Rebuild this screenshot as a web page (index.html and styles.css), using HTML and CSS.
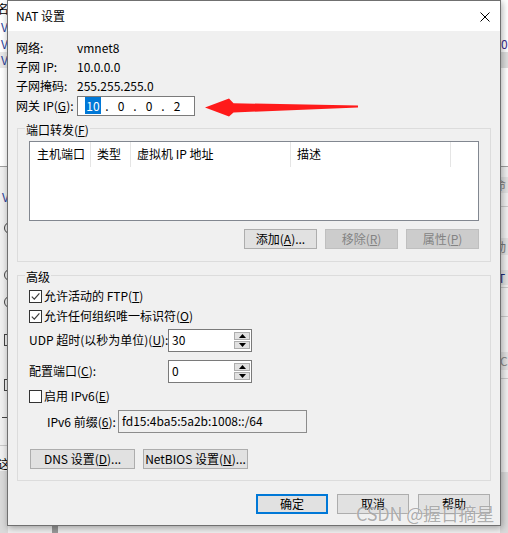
FILE: index.html
```html
<!DOCTYPE html>
<html lang="zh-CN">
<head>
<meta charset="utf-8">
<title>NAT 设置</title>
<link rel="stylesheet" href="styles.css">
</head>
<body>
<div class="desktop">
  <div class="bgwin">
    <div class="strip strip-left">
      <div class="s h18 white"><span class="frag fl-ming">名</span></div>
      <div class="s h17 white"><span class="frag fl-v">V</span></div>
      <div class="s h17 white"><span class="frag fl-v">V</span></div>
      <div class="s h16 band"><span class="frag fl-v">V</span></div>
      <div class="s h98 white"></div>
      <div class="s h1 line"></div>
      <div class="s h21"></div>
      <div class="s h18"><span class="frag fl-v2">V</span></div>
      <div class="s h14"></div>
      <div class="s h16"><span class="radio"></span></div>
      <div class="s h31"></div>
      <div class="s h16"><span class="radio"></span></div>
      <div class="s h11"></div>
      <div class="s h16"><span class="radio"></span></div>
      <div class="s h22"></div>
      <div class="s h16"><span class="cbx"></span></div>
      <div class="s h29"></div>
      <div class="s h16"><span class="cbx"></span></div>
      <div class="s h16"></div>
      <div class="s h16"><span class="dash"></span></div>
      <div class="s h20"></div>
      <div class="s h1 line2"></div>
      <div class="s h10"></div>
      <div class="s h15"><span class="frag fl-zhe">这</span></div>
      <div class="s rest dark"></div>
    </div>
    <div class="bg-middle">
      <div class="bg-fill"></div>
      <div class="bg-bottom"><span class="bg-bar"></span></div>
    </div>
    <div class="strip strip-right">
      <div class="s h35 white"></div>
      <div class="s h17 white"><span class="frag fr-0">0</span></div>
      <div class="s h16 band2"></div>
      <div class="s h98 white"></div>
      <div class="s h1 line"></div>
      <div class="s h10"></div>
      <div class="s h16 block"><span class="frag fr-txt">命</span></div>
      <div class="s h13"></div>
      <div class="s h1 line2"></div>
      <div class="s h31"></div>
      <div class="s h17 block"><span class="frag fr-txt">动</span></div>
      <div class="s h15"></div>
      <div class="s h15 block"><span class="frag fr-t">T</span></div>
      <div class="s h2"></div>
      <div class="s h1 line2"></div>
      <div class="s h28"></div>
      <div class="s h1 line2"></div>
      <div class="s h35"></div>
      <div class="s h18 block"><span class="frag fr-cf">CF</span></div>
      <div class="s h8"></div>
      <div class="s h1 line2"></div>
      <div class="s h93"></div>
      <div class="s rest dark"></div>
    </div>
  </div>

  <section class="dialog">
    <header class="titlebar">
      <span class="title">NAT 设置</span>
      <svg class="close" width="10" height="10" viewBox="0 0 10 10"><path d="M0.5 0.5 L9.5 9.5 M9.5 0.5 L0.5 9.5" stroke="#000" stroke-width="1" fill="none"/></svg>
    </header>
    <div class="body">
      <div class="info-row"><span class="lbl">网络:</span><span>vmnet8</span></div>
      <div class="info-row"><span class="lbl">子网 IP:</span><span>10.0.0.0</span></div>
      <div class="info-row"><span class="lbl">子网掩码:</span><span>255.255.255.0</span></div>
      <div class="info-row gw">
        <span class="lbl">网关 IP(<u>G</u>):</span>
        <div class="ipbox">
          <span class="oct"><span class="sel">10</span></span><span class="dot">.</span>
          <span class="oct">0</span><span class="dot">.</span>
          <span class="oct">0</span><span class="dot">.</span>
          <span class="oct">2</span>
        </div>
      </div>

      <fieldset class="group g-port">
        <legend>端口转发(<u>F</u>)</legend>
        <div class="list">
          <div class="list-head">
            <div class="col c1">主机端口</div>
            <div class="col c2">类型</div>
            <div class="col c3">虚拟机 IP 地址</div>
            <div class="col c4">描述</div>
          </div>
        </div>
        <div class="btnrow">
          <button class="btn w73">添加(<u>A</u>)...</button>
          <button class="btn w73 disabled">移除(<u>R</u>)</button>
          <button class="btn w73 disabled">属性(<u>P</u>)</button>
        </div>
      </fieldset>

      <fieldset class="group g-adv">
        <legend>高级</legend>
        <div class="chk-row first">
          <span class="checkbox"><svg width="11" height="11" viewBox="0 0 11 11"><path d="M1.8 5.6 L4.3 8.1 L9.4 2.4" stroke="#3a3a3a" stroke-width="1.2" fill="none"/></svg></span>
          <span>允许活动的 FTP(<u>T</u>)</span>
        </div>
        <div class="chk-row">
          <span class="checkbox"><svg width="11" height="11" viewBox="0 0 11 11"><path d="M1.8 5.6 L4.3 8.1 L9.4 2.4" stroke="#3a3a3a" stroke-width="1.2" fill="none"/></svg></span>
          <span>允许任何组织唯一标识符(<u>O</u>)</span>
        </div>
        <div class="spin-row udp">
          <span class="spin-lbl">UDP 超时(以秒为单位)(<u>U</u>):</span>
          <div class="spin">
            <span class="spin-val">30</span>
            <span class="spin-btns">
              <span class="sbtn"><svg width="7" height="4" viewBox="0 0 7 4"><path d="M0 4 L3.5 0 L7 4 Z" fill="#000"/></svg></span>
              <span class="sbtn"><svg width="7" height="4" viewBox="0 0 7 4"><path d="M0 0 L7 0 L3.5 4 Z" fill="#000"/></svg></span>
            </span>
          </div>
        </div>
        <div class="spin-row port">
          <span class="spin-lbl">配置端口(<u>C</u>):</span>
          <div class="spin">
            <span class="spin-val">0</span>
            <span class="spin-btns">
              <span class="sbtn"><svg width="7" height="4" viewBox="0 0 7 4"><path d="M0 4 L3.5 0 L7 4 Z" fill="#000"/></svg></span>
              <span class="sbtn"><svg width="7" height="4" viewBox="0 0 7 4"><path d="M0 0 L7 0 L3.5 4 Z" fill="#000"/></svg></span>
            </span>
          </div>
        </div>
        <div class="chk-row ipv6">
          <span class="checkbox"></span>
          <span>启用 IPv6(<u>E</u>)</span>
        </div>
        <div class="prefix-row">
          <span class="prefix-lbl">IPv6 前缀(<u>6</u>):</span>
          <div class="prefix-box">fd15:4ba5:5a2b:1008::/64</div>
        </div>
        <div class="dns-row">
          <button class="btn w105">DNS 设置(<u>D</u>)...</button>
          <button class="btn w105">NetBIOS 设置(<u>N</u>)...</button>
        </div>
      </fieldset>

      <div class="footer">
        <button class="btn w72 primary">确定</button>
        <button class="btn w72">取消</button>
        <button class="btn w72">帮助</button>
      </div>
    </div>
  </section>

  <svg class="arrow" width="162" height="26" viewBox="200 94 162 26">
    <path d="M205 107.5 L229 98.5 L233.5 103.2 L358 105.6 L358 107.6 L233.5 112.5 L229 116.5 Z" fill="#ff1a1a"/>
  </svg>
  <div class="watermark">CSDN @握日摘星</div>
</div>
</body>
</html>
```

FILE: styles.css
```css
* { box-sizing: border-box; }
html, body { margin: 0; padding: 0; }
body {
  width: 508px;
  height: 533px;
  overflow: hidden;
  font-family: "Noto Sans CJK SC", "Noto Sans", sans-serif;
  font-size: 12px;
  color: #000;
  background: #f0f0f0;
}
u { text-decoration: underline; text-underline-offset: 1px; }

.desktop { position: relative; width: 508px; height: 533px; overflow: hidden; }

/* background window */
.bgwin { display: flex; height: 533px; background: #f0f0f0; }
.strip { width: 8px; display: flex; flex-direction: column; overflow: hidden; flex: none; }
.bg-middle { flex: 1; display: flex; flex-direction: column; }
.bg-fill { flex: 1; }
.bg-bottom { height: 7px; display: flex; }
.bg-bar { width: 6px; margin-left: 44px; background: #9a9a9a; }
.s { flex: none; display: flex; align-items: center; overflow: hidden; white-space: nowrap; }
.h1 { height: 1px; } .h2 { height: 2px; } .h8 { height: 8px; } .h10 { height: 10px; }
.h11 { height: 11px; } .h13 { height: 13px; } .h14 { height: 14px; } .h15 { height: 15px; }
.h16 { height: 16px; } .h17 { height: 17px; } .h18 { height: 18px; } .h20 { height: 20px; }
.h21 { height: 21px; } .h22 { height: 22px; } .h28 { height: 28px; } .h29 { height: 29px; }
.h31 { height: 31px; } .h35 { height: 35px; } .h93 { height: 93px; } .h98 { height: 98px; }
.rest { flex: 1; }
.white { background: #fff; }
.band { background: #e9e9e9; }
.band2 { background: #dedede; }
.line { background: #a0a0a0; }
.line2 { background: #c9c9c9; }
.dark { background: #dadada; }
.block { background: #e1e1e1; }
.frag { font-size: 12px; line-height: 14px; flex: none; }
.fl-ming { margin-left: -3px; }
.fl-v { margin-left: 1px; color: #2b3d9a; }
.fl-v2 { margin-left: 2px; color: #2b3d9a; }
.fl-zhe { margin-left: -2px; }
.fr-0 { margin-left: 1px; color: #3b2a8c; }
.fr-txt { margin-left: -6px; color: #7a7a7a; }
.fr-t { margin-left: -2px; color: #1d2a7a; }
.fr-cf { margin-left: 0; color: #8a8a8a; }
.radio { width: 12px; height: 12px; margin-left: 4px; border: 1px solid #444; border-radius: 50%; flex: none; }
.cbx { width: 12px; height: 12px; margin-left: 4px; border: 1px solid #444; flex: none; }
.dash { width: 5px; height: 1px; margin-left: 2px; background: #444; flex: none; }

/* dialog */
.dialog {
  position: absolute;
  left: 7px;
  top: 0;
  width: 494px;
  height: 526px;
  border: 1px solid #707070;
  background: #f0f0f0;
  box-shadow: 1px 2px 7px rgba(0, 0, 0, 0.35);
  display: flex;
  flex-direction: column;
}
.titlebar {
  height: 30px;
  flex: none;
  background: #fff;
  display: flex;
  align-items: center;
  justify-content: space-between;
  padding: 0 10px 0 8px;
}
.title { font-size: 12px; line-height: 16px; padding-bottom: 1px; }
.close { display: block; margin-top: 1px; }

.body {
  flex: 1;
  display: flex;
  flex-direction: column;
  padding: 7px 9px 0 8px;
}
.info-row { display: flex; height: 19px; line-height: 19px; white-space: nowrap; }
.lbl { width: 61px; flex: none; }
.info-row.gw { margin-top: 1px; height: 20px; line-height: 20px; }
.ipbox {
  width: 118px;
  height: 20px;
  border: 1px solid #7a7a7a;
  background: #fff;
  display: flex;
  align-items: center;
  padding-left: 4px;
  line-height: 16px;
}
.oct { width: 22px; text-align: center; flex: none; }
.dot { width: 6px; text-align: center; flex: none; }
.sel { background: #0078d7; color: #fff; padding: 0 1px; }

/* group boxes */
.group {
  margin: 0 0 0 1px;
  padding: 0;
  border: 1px solid #dcdcdc;
  min-width: 0;
}
.group legend {
  margin-left: 7px;
  padding: 4px 1px 0;
  line-height: 16px;
  font-size: 12px;
}
.g-port { margin-top: 2px; padding-bottom: 12px; }
.g-adv { margin-top: 3px; padding-bottom: 11px; }

.list {
  margin: 3px 11px 0 11px;
  height: 80px;
  border: 1px solid #828790;
  background: #fff;
}
.list-head { display: flex; height: 25px; }
.col {
  height: 25px;
  line-height: 24px;
  border-right: 1px solid #e5e5e5;
  padding-left: 6px;
  white-space: nowrap;
  flex: none;
}
.c1 { width: 61px; padding-left: 7px; }
.c2 { width: 40px; }
.c3 { width: 160px; }
.c4 { width: 160px; }

.btn {
  font-family: "Noto Sans CJK SC", "Noto Sans", sans-serif;
  font-size: 12px;
  line-height: 16px;
  height: 20px;
  padding: 0;
  margin: 0;
  background: #e1e1e1;
  border: 1px solid #adadad;
  color: #000;
  text-align: center;
  white-space: nowrap;
  flex: none;
}
.btn.disabled { background: #cccccc; border-color: #bfbfbf; color: #838383; }
.btn.primary { border: 2px solid #0078d7; }
.w72 { width: 72px; }
.w73 { width: 73px; }
.w105 { width: 105px; }

.btnrow {
  display: flex;
  justify-content: flex-end;
  gap: 8px;
  margin-top: 8px;
  padding-right: 11px;
}

.chk-row {
  display: flex;
  align-items: center;
  height: 20px;
  line-height: 20px;
  padding-left: 11px;
  white-space: nowrap;
}
.chk-row.first { margin-top: 1px; }
.chk-row.ipv6 { margin-top: 4px; }
.checkbox {
  width: 13px;
  height: 13px;
  border: 1px solid #333;
  background: #fff;
  margin-right: 2px;
  display: flex;
  align-items: center;
  justify-content: center;
  flex: none;
}
.checkbox svg { display: block; }

.spin-row {
  display: flex;
  align-items: center;
  height: 22px;
  padding-left: 11px;
  white-space: nowrap;
}
.spin-row.udp { margin-top: 3px; }
.spin-row.port { margin-top: 9px; }
.spin-lbl { width: 139px; flex: none; line-height: 22px; }
.spin {
  width: 84px;
  height: 23px;
  border: 1px solid #7a7a7a;
  background: #fff;
  display: flex;
  justify-content: space-between;
  padding: 2px 1px 2px 3px;
}
.spin-val { line-height: 16px; }
.spin-btns { display: flex; flex-direction: column; gap: 1px; width: 16px; }
.sbtn {
  flex: 1;
  background: #e1e1e1;
  border: 1px solid #adadad;
  display: flex;
  align-items: center;
  justify-content: center;
}
.sbtn svg { display: block; }

.prefix-row {
  display: flex;
  align-items: center;
  height: 23px;
  margin-top: 4px;
  padding-left: 29px;
  white-space: nowrap;
}
.prefix-lbl { width: 71px; flex: none; line-height: 22px; }
.prefix-box {
  width: 189px;
  height: 23px;
  border: 1px solid #8c8c8c;
  background: #f0f0f0;
  padding-left: 3px;
  line-height: 20px;
}

.dns-row {
  display: flex;
  gap: 8px;
  margin-top: 16px;
  padding-left: 12px;
}

.footer {
  display: flex;
  justify-content: flex-end;
  gap: 9px;
  margin-top: 13px;
  padding-right: 1px;
}

/* overlays */
.arrow { position: absolute; left: 200px; top: 94px; display: block; }
.watermark {
  position: absolute;
  left: 356px;
  top: 502px;
  font-size: 18px;
  line-height: 22px;
  color: rgba(105, 105, 105, 0.55);
  text-shadow: 0 0 1px rgba(255, 255, 255, 0.9);
  white-space: nowrap;
  letter-spacing: -0.2px;
}
```
